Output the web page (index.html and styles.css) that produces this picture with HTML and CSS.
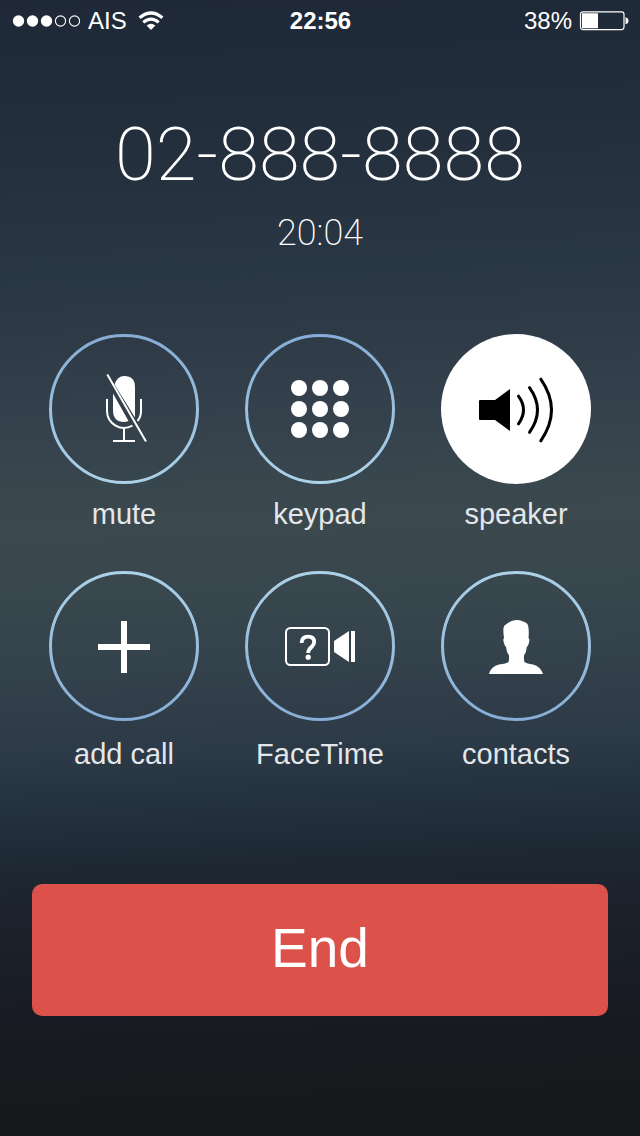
FILE: index.html
```html
<!DOCTYPE html>
<html lang="en">
<head>
<meta charset="utf-8">
<meta name="viewport" content="width=device-width, initial-scale=1">
<title>Call</title>
<link rel="stylesheet" href="styles.css">
</head>
<body>
<div class="screen">
  <header class="status">
    <div class="status-side">
      <svg class="signal" width="70" height="14" viewBox="0 0 70 14" role="img" aria-label="Signal: 3 of 5">
        <g fill="#fff"><circle cx="6.5" cy="7" r="5.7"/><circle cx="20.5" cy="7" r="5.7"/><circle cx="34.5" cy="7" r="5.7"/></g>
        <g fill="none" stroke="#fff" stroke-width="1.1"><circle cx="48.5" cy="7" r="5.1"/><circle cx="62.5" cy="7" r="5.1"/></g>
      </svg>
      <span class="carrier">AIS</span>
      <svg class="wifi" width="26" height="20" viewBox="0 0 26 20" role="img" aria-label="Wi-Fi">
        <g fill="none" stroke="#fff" stroke-width="3.2"><path d="M1.6 6.8Q13-2.8 24.4 6.8"/><path d="M5.3 11.4Q13 4.8 20.7 11.4"/></g>
        <path fill="#fff" d="M8.6 14.6Q13 10.8 17.4 14.6L13 19Z"/>
      </svg>
    </div>
    <time class="clock">22:56</time>
    <div class="status-side status-end">
      <span>38%</span>
      <svg class="battery" width="50" height="20" viewBox="0 0 50 20" role="img" aria-label="Battery">
        <rect x="1.500" y=".8" width="43.500" height="17.8" rx="2.5" fill="none" stroke="#fff" stroke-width="1.2"/>
        <path fill="#fff" d="M3 2.200h16v15H3zM46.500 6.200q3 .5 3 3.500t-3 3.500z"/>
      </svg>
    </div>
  </header>

  <main class="call">
    <h1 class="number">02-888-8888</h1>
    <p class="duration">20:04</p>

    <div class="keys">
      <button class="key" type="button">
        <svg class="icon" width="150" height="150" viewBox="0 0 150 150" aria-hidden="true">
          <defs>
            <linearGradient id="ring-upper" x2="0" y2="1"><stop stop-color="#86add5"/><stop offset="1" stop-color="#acd2e8"/></linearGradient>
            <linearGradient id="ring-lower" x2="0" y2="1"><stop stop-color="#acd2e8"/><stop offset="1" stop-color="#86add5"/></linearGradient>
          </defs>
          <circle class="ring-upper" cx="75" cy="75" r="73.500"/>
          <path fill="#fff" d="M65.500 50.500Q68.500 42 75 42Q86 42 86 53V83.500Z"/>
          <path fill="#fff" d="M64 59.500L79.500 87Q77 88 75 88Q64 88 64 76Z"/>
          <path fill="none" stroke="#fff" stroke-width="2" d="M58 65v12a17 17 0 0 0 25.500 14.500M92 65v12q0 6-3.500 10M75 94v13M64 107h22"/>
          <path stroke="#fff" stroke-width="2" d="M58.300 40.500L97 107.500"/>
        </svg>
        <span class="label">mute</span>
      </button>
      <button class="key" type="button">
        <svg class="icon" width="150" height="150" viewBox="0 0 150 150" aria-hidden="true">
          <circle class="ring-upper" cx="75" cy="75" r="73.500"/>
          <g fill="#fff"><circle cx="54" cy="54" r="8"/><circle cx="75" cy="54" r="8"/><circle cx="96" cy="54" r="8"/><circle cx="54" cy="75" r="8"/><circle cx="75" cy="75" r="8"/><circle cx="96" cy="75" r="8"/><circle cx="54" cy="96" r="8"/><circle cx="75" cy="96" r="8"/><circle cx="96" cy="96" r="8"/></g>
        </svg>
        <span class="label">keypad</span>
      </button>
      <button class="key" type="button" aria-pressed="true">
        <svg class="icon" width="150" height="150" viewBox="0 0 150 150" aria-hidden="true">
          <circle cx="75" cy="75" r="75" fill="#fff"/>
          <path d="M39 66H54L69 55V97L54 86H39Q38 86 38 85V67Q38 66 39 66Z"/>
          <path fill="none" stroke="#000" stroke-width="3" stroke-linecap="round" d="M77.500 62.200q10 13.800 0 27.600M88.500 53.700q16 22.300 0 44.600M99.800 45.200q21.400 30.800 0 61.600"/>
        </svg>
        <span class="label">speaker</span>
      </button>
    </div>

    <div class="keys keys-lower">
      <button class="key" type="button">
        <svg class="icon" width="150" height="150" viewBox="0 0 150 150" aria-hidden="true">
          <circle class="ring-lower" cx="75" cy="75" r="73.500"/>
          <path fill="#fff" d="M72 50h6v23h23v6H78v23h-6V79H49v-6h23z"/>
        </svg>
        <span class="label">add call</span>
      </button>
      <button class="key" type="button">
        <svg class="icon" width="150" height="150" viewBox="0 0 150 150" aria-hidden="true">
          <circle class="ring-lower" cx="75" cy="75" r="73.500"/>
          <rect x="41" y="57" width="43" height="37" rx="4.500" fill="none" stroke="#fff" stroke-width="2"/>
          <path fill="none" stroke="#fff" stroke-width="3.800" d="M56.600 72Q56.800 65.600 63 65.600T69.200 71Q69.200 73.500 66.500 76Q63.200 78.800 63.200 82"/>
          <circle cx="63.200" cy="86.200" r="2.600" fill="#fff"/>
          <path fill="#fff" d="M104 60V91L89 81V70ZM106 60h4v31h-4z"/>
        </svg>
        <span class="label">FaceTime</span>
      </button>
      <button class="key" type="button">
        <svg class="icon" width="150" height="150" viewBox="0 0 150 150" aria-hidden="true">
          <circle class="ring-lower" cx="75" cy="75" r="73.500"/>
          <path fill="#fff" d="M75.500 49Q82 49.300 86.500 53Q88.500 57 87.500 67Q89 68 88 71.500Q87.500 75 85.800 76Q85.500 81 83.200 84Q82.500 88 83.500 91Q86 92.800 92 93.500Q99.500 95.500 102 103H48Q50 95.500 58 93.500Q65.500 92.800 67.500 91Q68.500 88 67.800 84Q65.500 81 65 76Q63.500 75 62.800 71.500Q61.800 68 63 67Q61.500 57 63.500 54.500Q69 49.300 75.500 49Z"/>
        </svg>
        <span class="label">contacts</span>
      </button>
    </div>

    <button class="end" type="button">End</button>
  </main>
</div>
</body>
</html>
```
FILE: styles.css
```css
* {
  box-sizing: border-box;
}

body {
  margin: 0;
  background: #17181b;
  color: #fff;
  font-family: "Liberation Sans", Arial, sans-serif;
}

button {
  border: 0;
  padding: 0;
  background: none;
  color: inherit;
  font: inherit;
  cursor: pointer;
}

svg {
  display: block;
}

.screen {
  min-height: 100vh;
  background: linear-gradient(178deg, #1e2836 0%, #222d3b 10%, #293643 24%, #34414c 36%, #3b494f 46%, #3a484e 49%, #34424c 58%, #2d3a47 65%, #24323e 70%, #1d2833 75%, #1c212c 80%, #181b23 88%, #18191d 94%, #17181b 100%);
}

.status {
  display: grid;
  grid-template-columns: 1fr auto 1fr;
  align-items: center;
  height: 42px;
  padding: 0 11px 0 12px;
  font-size: 24px;
}

.status-side {
  display: flex;
  align-items: center;
}

.carrier {
  margin: 0 11px 0 6px;
}

.status-end {
  justify-content: flex-end;
  gap: 7px;
}

.clock {
  font-weight: 700;
}

.call {
  display: flex;
  flex-direction: column;
  padding: 71px 32px 120px;
}

.number,
.duration {
  margin: 0;
  font-family: Roboto, "Liberation Sans", sans-serif;
  font-weight: 200;
  text-align: center;
}

.number {
  font-size: 74px;
  line-height: 84px;
}

.duration {
  margin-top: 14px;
  font-size: 36px;
  line-height: 44px;
}

.keys {
  display: grid;
  grid-template-columns: repeat(3, 150px);
  justify-content: center;
  column-gap: 46px;
  margin-top: 79px;
}

.keys-lower {
  margin-top: 41px;
}

.key {
  display: flex;
  flex-direction: column;
  align-items: center;
  gap: 14px;
}

.keys-lower .key {
  gap: 17px;
}

.ring-upper,
.ring-lower {
  fill: none;
  stroke: url(#ring-upper);
  stroke-width: 3px;
}

.ring-lower {
  stroke: url(#ring-lower);
}

.label {
  font-size: 29px;
  line-height: 32px;
  color: #e4e7e9;
  white-space: nowrap;
}

.end {
  height: 132px;
  margin-top: 114px;
  padding-bottom: 5px;
  border-radius: 10px;
  background: #dc524b;
  font-size: 55px;
}
```
